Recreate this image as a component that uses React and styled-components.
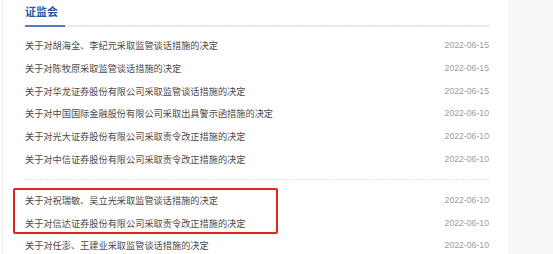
import React from 'react';
import styled, { createGlobalStyle } from 'styled-components';

const GlobalStyle = createGlobalStyle`
  html, body {
    margin: 0;
    padding: 0;
    background: #fff;
  }
`

const Page = styled.div`
  display: flex;
  height: 254px;
  overflow: hidden;
  font-family: "Noto Sans CJK SC", "Noto Sans", sans-serif;
`

const Main = styled.div`
  width: 464px;
  flex-shrink: 0;
  margin-left: 2px;
  border-left: 1px solid #ececec;
  padding: 0 19px 0 22px;
`

const Sidebar = styled.div`
  flex: 1;
  background: #f6f6f6;
`

const Title = styled.h2`
  margin: 0;
  padding-top: 3px;
  font-size: 11px;
  line-height: 16px;
  font-weight: bold;
  color: #2c5ba6;
`

const Underline = styled.div`
  display: flex;
  height: 2px;
  margin-top: 6px;
`

const UnderlineAccent = styled.div`
  width: 40px;
  background: #4d7cc2;
`

const UnderlineRest = styled.div`
  flex: 1;
  background: repeating-linear-gradient(90deg, #dde6f1 0 2px, #eef2f8 2px 3px);
`

const Group = styled.div`
  position: relative;
  margin-top: ${p => p.$top || 0}px;
`

const Divider = styled.div`
  margin-top: 9px;
  border-top: 1px dashed #e2e2e2;
`

const Row = styled.div`
  display: flex;
  align-items: center;
  justify-content: space-between;
  height: 22.8px;
`

const Link = styled.a`
  font-size: 9.2px;
  color: #4a4a4a;
  text-decoration: none;
  white-space: nowrap;
`

const Date = styled.span`
  font-family: "Liberation Sans", Arial, sans-serif;
  font-size: 8.7px;
  color: #9c9c9c;
`

const Highlight = styled.div`
  position: absolute;
  left: -12px;
  top: 0;
  width: 261px;
  height: 42px;
  border: 2px solid #e32222;
  border-radius: 2px;
  pointer-events: none;
`

const first = [
  ['关于对胡海全、李纪元采取监管谈话措施的决定', '2022-06-15'],
  ['关于对陈牧原采取监管谈话措施的决定', '2022-06-15'],
  ['关于对华龙证券股份有限公司采取监管谈话措施的决定', '2022-06-15'],
  ['关于对中国国际金融股份有限公司采取出具警示函措施的决定', '2022-06-10'],
  ['关于对光大证券股份有限公司采取责令改正措施的决定', '2022-06-10'],
  ['关于对中信证券股份有限公司采取责令改正措施的决定', '2022-06-10'],
]

const second = [
  ['关于对祝瑞敏、吴立光采取监管谈话措施的决定', '2022-06-10'],
  ['关于对信达证券股份有限公司采取责令改正措施的决定', '2022-06-10'],
  ['关于对任澎、王建业采取监管谈话措施的决定', '2022-06-10'],
]

const NewsRow = ({ title, date }) => (
  <Row>
    <Link href="#">{title}</Link>
    <Date>{date}</Date>
  </Row>
)

export default function App() {
  return (
    <Page>
      <GlobalStyle />
      <Main>
        <Title>证监会</Title>
        <Underline>
          <UnderlineAccent />
          <UnderlineRest />
        </Underline>
        <Group $top={6.6}>
          {first.map(([t, d]) => <NewsRow key={t} title={t} date={d} />)}
        </Group>
        <Divider />
        <Group $top={8}>
          <Highlight />
          {second.map(([t, d]) => <NewsRow key={t} title={t} date={d} />)}
        </Group>
      </Main>
      <Sidebar />
    </Page>
  );
}
